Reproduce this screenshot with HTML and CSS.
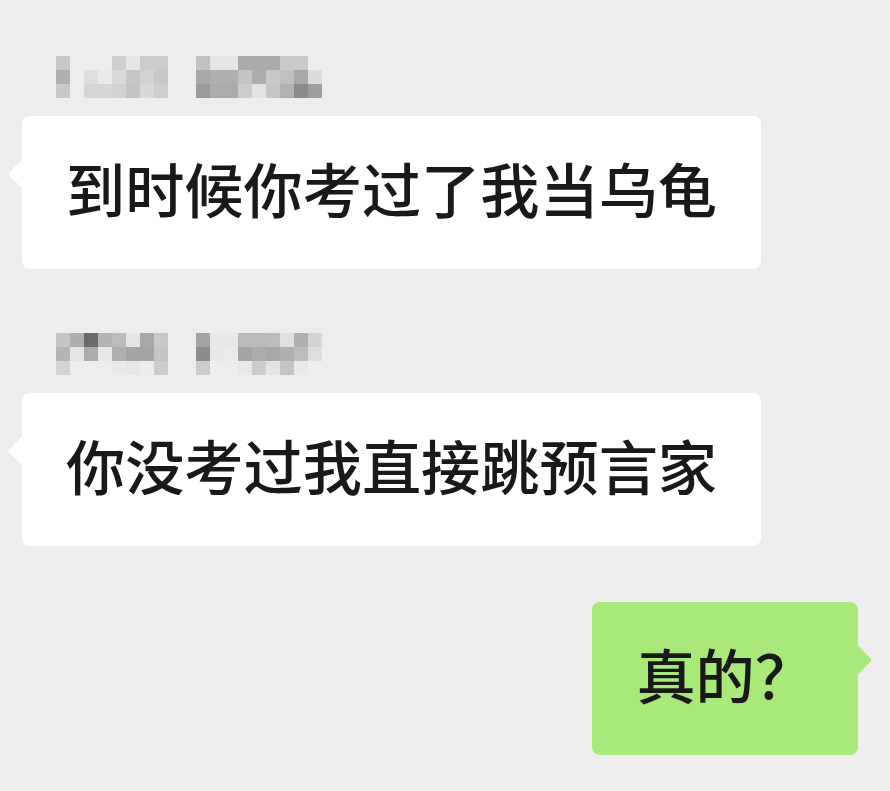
FILE: index.html
```html
<!DOCTYPE html>
<html lang="zh-CN">
<head>
    <meta charset="UTF-8">
    <meta name="viewport" content="width=device-width, initial-scale=1.0">
    <title>聊天</title>
    <link rel="stylesheet" href="styles.css">
</head>
<body>
    <div class="chat">
        <div class="msg msg-in">
            <div class="name mosaic" data-name="a"></div>
            <div class="bubble">到时候你考过了我当乌龟</div>
        </div>

        <div class="msg msg-in">
            <div class="name mosaic" data-name="b"></div>
            <div class="bubble">你没考过我直接跳预言家</div>
        </div>

        <div class="msg msg-out">
            <div class="bubble bubble-green">真的？</div>
        </div>
    </div>

    <script>
        // 昵称打码：每格 14px，3 行 19 列，空字符串表示透明
        const names = {
            a: [
                ['#c8c8c8', '', '', '', '#cfcfcf', '#e6e6e6', '#cccccc', '#cccccc', '', '', '#c2c2c2', '#e6e6e6', '#e6e6e6', '#ababab', '#ababab', '#ababab', '#cacaca', '#cacaca', ''],
                ['#b0b0b0', '', '#dedede', '#e9e9e9', '#dadada', '#c6c6c6', '#d2d2d2', '#c8c8c8', '', '', '#a8a8a8', '#b0b0b0', '#b0b0b0', '#c4c4c4', '#acacac', '#c8c8c8', '#c0c0c0', '#a8a8a8', '#dcdcdc'],
                ['#c8c8c8', '', '#d6d6d6', '#d6d6d6', '#d2d2d2', '#c4c4c4', '#d8d8d8', '#cecece', '', '', '#9a9a9a', '#acacac', '#acacac', '#cccccc', '#e2e2e2', '#c6c6c6', '#b2b2b2', '#8c8c8c', '#9e9e9e']
            ],
            b: [
                ['#c4c4c4', '#aeaeae', '#6a6a6a', '#b4b4b4', '#bcbcbc', '#e4e4e4', '#a8a8a8', '#c8c8c8', '', '', '#a4a4a4', '#e8e8e8', '#e8e8e8', '#bababa', '#bababa', '#bcbcbc', '#e0e0e0', '#b0b0b0', '#d4d4d4'],
                ['#b4b4b4', '#e4e4e4', '#acacac', '#e8e8e8', '#b0b0b0', '#a4a4a4', '#a4a4a4', '#c4c4c4', '', '', '#8c8c8c', '#e8e8e8', '#ececec', '#a4a4a4', '#acacac', '#a8a8a8', '#b0b0b0', '#bcbcbc', '#dedede'],
                ['#d4d4d4', '', '', '', '#e8e8e8', '#e6e6e6', '#ececec', '#cccccc', '', '', '#cccccc', '', '', '#e8e8e8', '#cccccc', '#e4e4e4', '#c4c4c4', '#e8e8e8', '']
            ]
        };

        document.querySelectorAll('.mosaic').forEach(el => {
            names[el.dataset.name].forEach(row => {
                row.forEach(color => {
                    const cell = document.createElement('span');
                    if (color) cell.style.background = color;
                    el.appendChild(cell);
                });
            });
        });
    </script>
</body>
</html>
```

FILE: styles.css
```css
body {
    margin: 0;
    background-color: #ededed;
    font-family: "Noto Sans CJK SC", "Noto Sans", sans-serif;
    color: #191919;
}
.chat {
    display: flex;
    flex-direction: column;
    padding: 56px 32px 0 22px;
}
.msg {
    display: flex;
    flex-direction: column;
    align-items: flex-start;
}
.msg + .msg {
    margin-top: 64px;
}
.msg-out {
    align-items: flex-end;
}
.msg-in + .msg-out {
    margin-top: 56px;
}
.name {
    margin-left: 34px;
    margin-bottom: 18px;
}
.mosaic {
    display: grid;
    grid-template-columns: repeat(19, 14px);
    grid-auto-rows: 14px;
    filter: blur(0.6px);
}
.bubble {
    position: relative;
    padding: 42px 44px 52px;
    font-size: 59.2px;
    font-weight: 500;
    line-height: 59px;
    background-color: #ffffff;
    border-radius: 8px;
    white-space: nowrap;
}
/* 气泡的小三角 */
.bubble::before {
    content: "";
    position: absolute;
    top: 48px;
    left: -10px;
    width: 20px;
    height: 20px;
    background: inherit;
    border-radius: 2px;
    transform: rotate(45deg);
}
.bubble-green {
    background-color: #a9e97b;
}
.bubble-green::before {
    left: auto;
    right: -10px;
}
```
